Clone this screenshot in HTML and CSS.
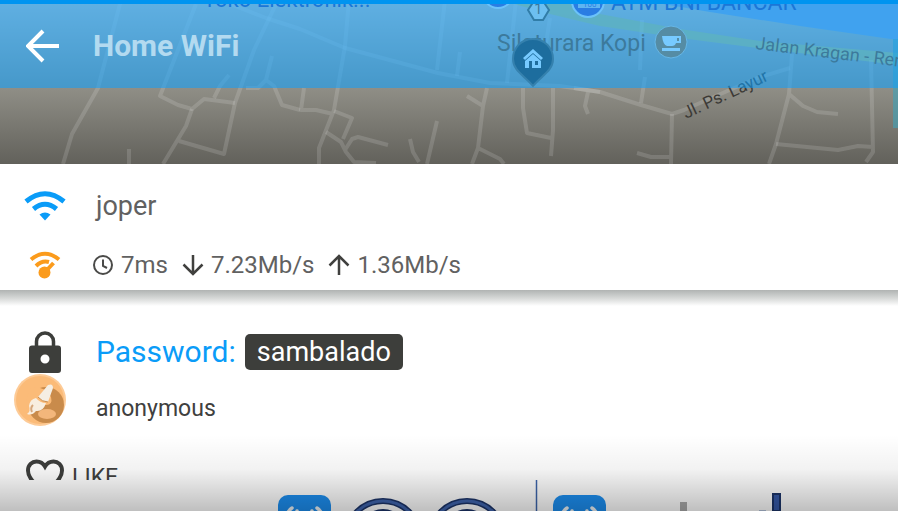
FILE: index.html
```html
<!DOCTYPE html>
<html lang="en">
<head>
<meta charset="utf-8">
<meta name="viewport" content="width=device-width, initial-scale=1">
<title>Home WiFi</title>
<link rel="stylesheet" href="styles.css">
</head>
<body>
<div class="screen">
  <div class="hero">
    <svg class="map" viewBox="0 0 898 164" preserveAspectRatio="xMinYMin slice" aria-label="Map">
      <path class="water" d="M640 0 L710 12 L800 26 L898 40 V0Z"/>
      <path class="highway" d="M500 0 H560 L600 14 L680 29 L760 41 L898 53 V65 L750 47 L680 38 L600 26 L550 14Z"/>
      <g class="roads">
        <path d="M121 0 L98 88 L72 134 L63 164"/>
        <path d="M196 4 L160 96 L178 105 L192 109 L204 99 L235 103"/>
        <path d="M192 109 L186 126 L163 164 M179 141 L224 154 L235 103 L254 50 L278 0"/>
        <path d="M214 98 L220 86 L229 75 M272 56 L266 80 L258 88 H246 M266 80 L274 86 L282 105 L300 110"/>
        <path d="M129 149 V164"/>
        <path d="M230 4 L266 18 L300 29 L345 48 L438 73 L490 83 L560 86 L600 92 L641 105 L672 114 L684 110 L757 78 L790 68"/>
        <path d="M349 0 L345 46 L334 110 L319 148 V164 M304 88 L301 110 L316 110 L333 114"/>
        <path d="M334 111 L352 118 L343 139 M326 132 L341 142 L346 152 L354 162 L376 163 M345 150 L352 139 L358 137 L388 145"/>
        <path d="M445 0 L437 70 M460 52 L457 76 M516 0 L507 83"/>
        <path d="M487 88 L483 106 L478 148 L472 164 M467 96 L483 106 M478 148 L500 159 L504 164"/>
        <path d="M437 121 L427 164 M410 139 L413 152 L419 162"/>
        <path d="M523 88 V108 L527 133 L551 138 M553 88 V130 L551 156 M550 18 L545 50"/>
        <path d="M574 88 L600 92 M588 92 L585 106 L588 114 M645 77 L641 103 M642 20 L640 70"/>
        <path d="M672 114 L671 164 M637 153 L651 157 L671 157"/>
        <path d="M792 54 L789 94 L776 144 L769 164 M789 94 L803 106 L817 112 L838 114"/>
        <path d="M776 144 L838 150 L858 146 L873 147 M871 60 L873 152 L866 162"/>
      </g>
      <path class="strip" d="M893 39 H898 V128 H893Z"/>
      <g class="place">
        <text x="203" y="7" font-size="22">Toko Elektronik...</text>
        <text x="611" y="10" font-size="23">ATM BNI BANCAR</text>
      </g>
      <g class="marker"><circle cx="498" cy="-7" r="15"/><circle cx="588" cy="1" r="16"/></g>
      <path class="note" d="M578 0 H600 V8 H578Z"/>
      <text class="atm" x="583" y="7">100</text>
      <path class="shield" d="M534 1 H543 L549 10 L543 20 H534 L528 10Z"/>
      <text class="label" x="534" y="14" font-size="15">1</text>
      <text class="label" x="497" y="51" font-size="23">Silaturara Kopi</text>
      <circle class="cafe" cx="671" cy="42" r="16"/>
      <path class="cup" d="M662 36 H681 V43 H676 Q675 46 672 46 H667 Q663 45 662 36Z M662 48 H680 V51 H662Z"/>
      <path class="handle" d="M677 38 H679 V41 H677Z"/>
      <text class="label" transform="translate(755 49) rotate(7)" font-size="18">Jalan Kragan - Ren</text>
      <text class="street" transform="translate(686 119) rotate(-25)" font-size="17">Jl. Ps. Layur</text>
      <path class="pin" d="M533 39 C521 39 513 48 513 59 C513 71 525 76 533 86 C541 76 553 71 553 59 C553 48 545 39 533 39Z"/>
      <path class="house" fill-rule="evenodd" d="M533 49 L543 58 L541 60 L533 53 L525 60 L523 58Z M533 54 L541 61 V68 H525 V61Z M529 61 V68 H532 V61Z M535 61 V65 H538 V61Z"/>
    </svg>
    <header class="bar">
      <button class="back" type="button" aria-label="Back">
        <svg width="34" height="34" viewBox="0 0 34 34"><path d="M33 17 H3 M17 2 L2 17 L17 32" fill="none" stroke="#fff" stroke-width="4"/></svg>
      </button>
      <h1>Home WiFi</h1>
    </header>
  </div>

  <section class="network">
    <div class="row">
      <span class="icon">
        <svg width="42" height="30" viewBox="0 0 42 30"><g fill="none" stroke="#0a9cf8" stroke-width="5"><path d="M2 10.5 Q21 -5 40 10.5"/><path d="M9.500 18 Q21 8.500 32.500 18"/></g><path d="M15.500 23.500 Q21 19.500 26.500 23.500 L21 29.500Z" fill="#0a9cf8"/></svg>
      </span>
      <span class="ssid">joper</span>
    </div>
    <div class="row">
      <span class="icon">
        <svg width="32" height="28" viewBox="0 0 32 28"><g fill="none" stroke="#fb9b1c" stroke-width="4"><path d="M2 8.500 Q16 -3 30 8.500"/><path d="M7 15 Q13 9 20 11"/><path d="M17 20 L24.500 12"/></g><circle cx="15.500" cy="21.500" r="6" fill="#fb9b1c"/></svg>
      </span>
      <ul class="stats">
        <li><svg width="22" height="22" viewBox="0 0 22 22"><g fill="none" stroke="#4a4a48" stroke-width="2"><circle cx="11" cy="11" r="9"/><path d="M11 5.500 V12 L15 14"/></g></svg>7ms</li>
        <li><svg width="22" height="22" viewBox="0 0 22 22"><path d="M11 1 V20 M1.500 10.500 L11 20 L20.500 10.500" fill="none" stroke="#40403e" stroke-width="2.500"/></svg>7.23Mb/s</li>
        <li><svg width="22" height="22" viewBox="0 0 22 22"><path d="M11 21 V2 M1.500 11.500 L11 2 L20.500 11.500" fill="none" stroke="#40403e" stroke-width="2.500"/></svg>1.36Mb/s</li>
      </ul>
    </div>
  </section>

  <section class="access">
    <div class="row">
      <span class="icon">
        <svg width="32" height="42" viewBox="0 0 32 42"><path d="M7.500 17 V10.500 A8.500 8.500 0 0 1 24.500 10.500 V17" fill="none" stroke="#3d3e3b" stroke-width="3.500"/><path fill="#3d3e3b" fill-rule="evenodd" d="M3 14.500 H29 Q32 14.500 32 17.500 V39 Q32 42 29 42 H3 Q0 42 0 39 V17.500 Q0 14.500 3 14.500Z M16 23.500 A4.500 4.500 0 1 0 16 32.500 A4.500 4.500 0 1 0 16 23.500Z"/></svg>
      </span>
      <p class="password">Password: <strong>sambalado</strong></p>
    </div>
    <div class="row author">
      <span class="icon"></span>
      <span>anonymous</span>
    </div>
    <button class="like" type="button">
      <svg width="38" height="36" viewBox="0 0 38 36"><path d="M19 33 C8 24 2 19 2 11.500 C2 6 6 2.500 10.500 2.500 C14 2.500 17 4 19 7.500 C21 4 24 2.500 27.500 2.500 C32 2.500 36 6 36 11.500 C36 19 30 24 19 33Z" fill="none" stroke="#3d3e3c" stroke-width="4"/></svg>
      LIKE
    </button>
    <svg class="avatar" viewBox="0 0 52 52" aria-hidden="true">
      <circle cx="26" cy="26" r="26" fill="#fdcb97"/><circle cx="26" cy="26" r="24" fill="#fbbb78"/>
      <circle cx="32" cy="31" r="18" fill="#c98b4b"/>
      <path d="M17 13 Q32 12 37 23 Q39 31 32 31 Q23 30 14 40 Q10 25 17 13Z" fill="#fbbb78"/>
      <ellipse cx="33" cy="40" rx="9" ry="5" fill="#f3b67b"/>
      <path d="M34 11 Q39 9 39 14 L34 28 Q28 28 24 23Z" fill="#f5eee3"/>
      <path d="M22 24 Q26 29 32 29 Q29 38 22 37 Q18 42 13 40 Q17 37 15 32 Q16 25 22 24Z" fill="#f8eee0"/>
      <path d="M24 23 Q28 28 34 28" fill="none" stroke="#c98b4b" stroke-width="1"/>
      <path d="M19 31 Q16 34 18 38" fill="none" stroke="#d6a77c" stroke-width="2"/>
    </svg>
  </section>

  <footer class="banner">
    <svg viewBox="0 0 898 31" preserveAspectRatio="xMinYMin slice" aria-hidden="true">
      <g fill="#1c8ef0"><rect x="278" y="15" width="53" height="50" rx="10"/><rect x="553" y="15" width="53" height="50" rx="10"/></g>
      <g fill="none" stroke="#eef4f8" stroke-width="3.500" stroke-linecap="round"><path d="M292 28 Q289 30 287 34 M317 28 Q320 30 322 34 M297 31 L296 34 M312 31 L313 34"/><path d="M567 28 Q564 30 562 34 M592 28 Q595 30 597 34 M572 31 L571 34 M587 31 L588 34"/></g>
      <g fill="#fff" stroke="#1c3468" stroke-width="6"><circle cx="383" cy="58" r="37"/><circle cx="467" cy="58" r="37"/></g>
      <g fill="none" stroke="#3f64ad" stroke-width="3"><circle cx="383" cy="58" r="37"/><circle cx="467" cy="58" r="37"/></g>
      <g fill="#1c3468"><circle cx="383" cy="54" r="25"/><circle cx="467" cy="54" r="25"/></g>
      <path d="M536.500 0 V31" stroke="#3c64aa" stroke-width="1.500"/>
      <path d="M680 22 H687 V31 H680Z" fill="#aaa"/>
      <path d="M759 30 H766 V31 H759Z" fill="#b5c4dd"/>
      <path d="M773 14 H780 V31 H773Z" fill="#3559a8" stroke="#1c3468" stroke-width="2"/>
    </svg>
  </footer>
  <div class="shade"></div>
</div>
</body>
</html>
```
FILE: styles.css
```css
* { box-sizing: border-box; }

body {
  margin: 0;
  background: #fff;
  color: #616161;
  font-family: Roboto, "Liberation Sans", sans-serif;
}

.screen {
  position: relative;
  display: grid;
  grid-template-rows: auto auto 1fr auto;
  min-height: 100vh;
}

/* Map and app bar */
.hero {
  display: grid;
  height: 164px;
  overflow: hidden;
  background: linear-gradient(#cbc4bf, #8f8e86 54%, #62615b);
}

.map,
.bar { grid-area: 1 / 1; }

.map {
  width: 100%;
  height: 164px;
}

.roads {
  fill: none;
  stroke: #fff;
  stroke-opacity: .14;
  stroke-width: 4;
  stroke-linejoin: round;
}

.water { fill: #82a5da; }
.highway { fill: #c3c872; opacity: .8; }
.strip { fill: #3fa3b9; opacity: .6; }
.place { fill: #2f41a5; font-weight: 400; }
.marker { fill: #5050c0; stroke: #e4ecf4; stroke-width: 2; }
.note { fill: #c8d0e0; }
.atm { fill: #5050c0; font-size: 8px; }
.shield { fill: #e7e7e0; stroke: #60503a; stroke-width: 2; }
.label { fill: #7a4a1c; }
.street { fill: #3c3a36; }
.cafe { fill: #b17230; stroke: #d8d4c8; stroke-width: 1; }
.cup { fill: #fff; }
.handle { fill: #b17230; }
.pin { fill: #342d22; stroke: #6a5a48; stroke-width: 2; }
.house { fill: #fff; }

.bar {
  display: flex;
  align-items: center;
  align-self: start;
  z-index: 1;
  gap: 33px;
  height: 88px;
  padding: 0 26px;
  border-top: 4px solid #0094f0;
  background: rgba(12, 160, 255, .56);
  background-clip: padding-box;
}

.bar h1 {
  margin: 0;
  color: #b3daf0;
  font-size: 30px;
  font-weight: 700;
  line-height: 40px;
}

button {
  border: 0;
  padding: 0;
  background: none;
  color: inherit;
  font: inherit;
  cursor: pointer;
}

svg { display: block; flex: none; }

/* Cards */
.network {
  display: grid;
  gap: 23px;
  padding: 22px 24px 9px;
}

.row {
  display: flex;
  align-items: center;
  min-height: 32px;
  gap: 30px;
}

.icon {
  display: flex;
  justify-content: center;
  width: 42px;
}

.ssid {
  font-size: 27px;
  line-height: 40px;
}

.stats {
  display: flex;
  gap: 14px;
  margin: 0 0 0 -4px;
  padding: 0;
  list-style: none;
  font-size: 24px;
  line-height: 32px;
}

.stats li {
  display: flex;
  align-items: center;
  gap: 7px;
}

.access {
  position: relative;
  display: flex;
  flex-direction: column;
  height: 190px;
  min-height: 100%;
  padding: 44px 24px 0;
  overflow: hidden;
  background: linear-gradient(#b0b3b2, #d5d7d6 8px, #fff 16px);
}

.access .row { flex: none; height: 36px; }

.password {
  display: flex;
  align-items: center;
  gap: 9px;
  margin: 0;
  color: #0a9cf8;
  font-size: 30px;
  line-height: 36px;
}

.password strong {
  padding: 0 12px;
  border-radius: 5px;
  background: #3d3e3b;
  color: #fff;
  font-size: 27px;
  font-weight: 400;
}

.access .author {
  margin-top: 20px;
  color: #40403e;
  font-size: 23px;
}

.like {
  display: flex;
  flex: none;
  align-items: center;
  align-self: flex-start;
  gap: 8px;
  height: 36px;
  margin: 33px 0 0 2px;
  color: #40403e;
  font-size: 23px;
}

.avatar {
  position: absolute;
  top: 84px;
  left: 14px;
  width: 52px;
}

.banner { height: 31px; overflow: hidden; }

.banner svg {
  width: 100%;
  height: 31px;
}

.shade {
  position: absolute;
  right: 0;
  bottom: 0;
  left: 0;
  height: 76px;
  background: linear-gradient(transparent, rgba(0, 0, 0, .05) 45%, rgba(0, 0, 0, .25));
  pointer-events: none;
}
```
